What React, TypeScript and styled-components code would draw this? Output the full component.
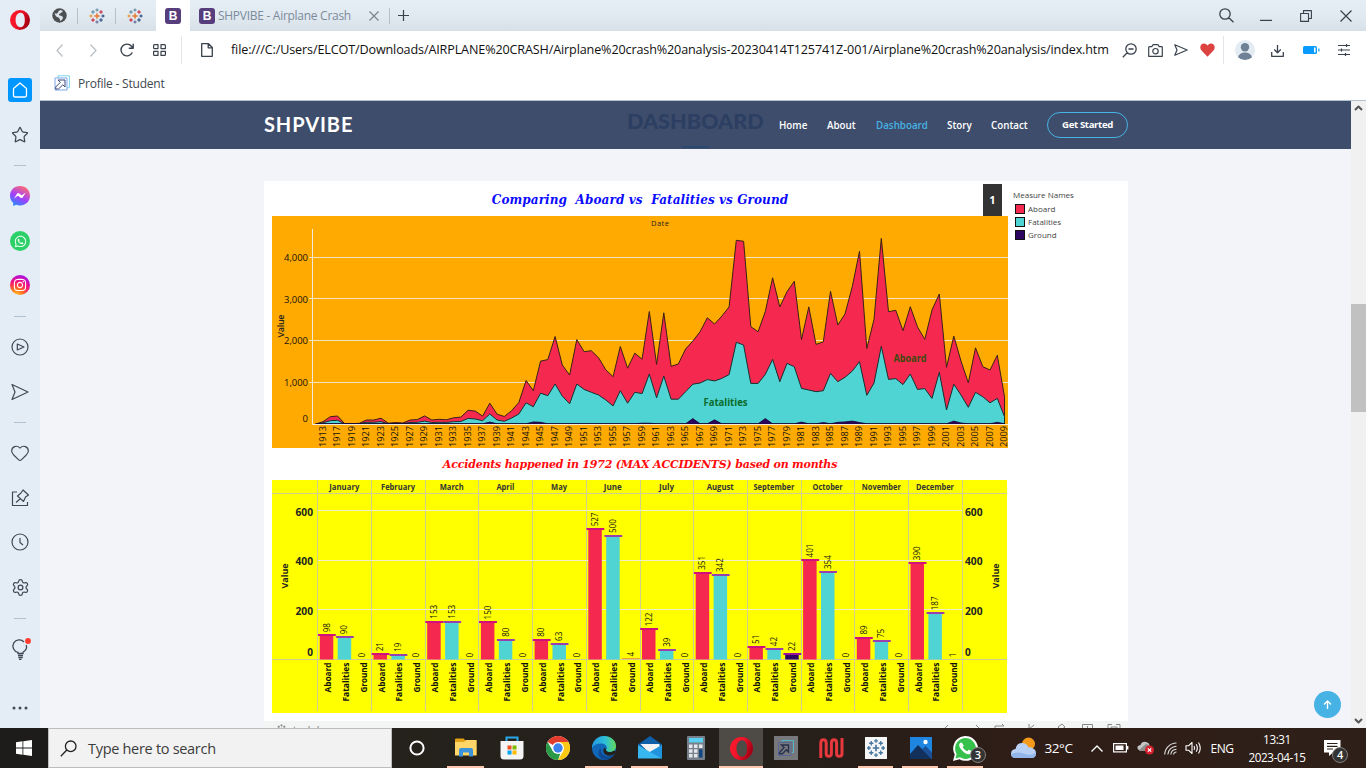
import React from "react";
import styled, { createGlobalStyle } from "styled-components";
import { Star, Heart, Settings } from "lucide-react";
import { FaWhatsapp, FaInstagram } from "react-icons/fa";

const Global = createGlobalStyle`
  * { box-sizing: border-box; }
  body { margin: 0; background: #f3f4fa; overflow: hidden; font-family: "Open Sans", "Noto Sans", sans-serif; }
  svg { display: block; flex: none; }
`;

const Screen = styled.div`
  width: 1366px;
  height: 768px;
  display: flex;
  flex-direction: column;
  overflow: hidden;
`;
const Browser = styled.div`
  height: 728px;
  display: flex;
`;
const Sidebar = styled.aside`
  width: 40px;
  background: #e4edf5;
  display: flex;
  flex-direction: column;
  align-items: center;
  color: #3f4a56;
`;
const SideItem = styled.div<{ $gap: number; $h: number }>`
  margin-top: ${(p) => p.$gap}px;
  height: ${(p) => p.$h}px;
  flex: none;
  display: flex;
  align-items: center;
  justify-content: center;
`;
const SideRule = styled.div<{ $gap: number }>`
  margin-top: ${(p) => p.$gap}px;
  width: 12px;
  height: 1px;
  flex: none;
  background: #b3c2d0;
`;
const HomeTile = styled.div`
  width: 24px;
  height: 24px;
  border-radius: 3px;
  background: #0096ff;
  display: flex;
  align-items: center;
  justify-content: center;
`;
const Disc = styled.div<{ $bg: string }>`
  width: 20px;
  height: 20px;
  border-radius: 50%;
  background: ${(p) => p.$bg};
  color: #fff;
  display: flex;
  align-items: center;
  justify-content: center;
`;
const Window = styled.div`
  width: 1326px;
  display: flex;
  flex-direction: column;
`;
const TabBar = styled.div`
  height: 31px;
  display: flex;
  align-items: stretch;
  background: linear-gradient(#e5edf5 0%, #e1e9f1 50%, #d7dfe7 100%);
`;
const Cell = styled.div<{ $w: number }>`
  width: ${(p) => p.$w}px;
  flex: none;
  display: flex;
  align-items: center;
  justify-content: center;
  color: #39424c;
`;
const PageCell = styled(Cell)`
  padding-left: 3px;
`;
const Tab = styled(Cell)<{ $active?: boolean; $rule?: boolean }>`
  background: ${(p) => (p.$active ? "#fff" : "transparent")};
  background-image: ${(p) => (p.$rule ? "linear-gradient(#b4c0cc, #b4c0cc)" : "none")};
  background-size: 1px 16px;
  background-repeat: no-repeat;
  background-position: right center;
`;
const WideTab = styled.div`
  width: 199px;
  flex: none;
  padding-left: 9px;
  display: flex;
  align-items: center;
  color: #7c8b9a;
  font-size: 12px;
`;
const TabTitle = styled.span`
  width: 154px;
  padding-left: 3px;
  white-space: nowrap;
  letter-spacing: -0.28px;
`;
const BootMark = styled.div`
  width: 16px;
  height: 16px;
  border-radius: 3px;
  background: #563d7c;
  color: #fff;
  font: bold 12px/16px "Liberation Sans", sans-serif;
  text-align: center;
`;
const Spring = styled.div`
  flex: 1;
`;
const Toolbar = styled.div`
  height: 38px;
  display: flex;
  align-items: stretch;
  background: #fff;
`;
const Address = styled.div`
  width: 886px;
  flex: none;
  padding-left: 3px;
  font-size: 12.6px;
  line-height: 38px;
  color: #111;
  white-space: nowrap;
  letter-spacing: -0.135px;
`;
const VRule = styled.div`
  width: 1px;
  height: 28px;
  margin-top: 5px;
  flex: none;
  background: #e2e6ea;
`;
const Bookmarks = styled.div`
  height: 32px;
  padding: 0 0 3px 14px;
  display: flex;
  align-items: center;
  gap: 8px;
  background: #fff;
  border-bottom: 1px solid #b2c1cd;
  font-size: 12px;
  letter-spacing: -0.22px;
  color: #40484f;
`;
const Page = styled.div`
  flex: 1;
  display: flex;
  min-height: 0;
`;
const Site = styled.main`
  width: 1311px;
  background: #f3f4fa;
  position: relative;
  overflow: hidden;
`;
const SiteHeader = styled.header`
  height: 48px;
  background: #3e4d6b;
  display: flex;
  align-items: center;
  padding: 0 223px 0 224px;
  position: relative;
`;
const Brand = styled.div`
  color: #fff;
  font: 700 20px/24px Lato, sans-serif;
  letter-spacing: 0.9px;
  position: relative;
  top: -1px;
  flex: 1;
`;
const GhostTitle = styled.div`
  position: absolute;
  left: 587px;
  top: 7px;
  color: #2c3f62;
  font: 900 21.6px/26px Lato, sans-serif;
  white-space: nowrap;
`;
const GhostBar = styled.div`
  position: absolute;
  left: 642px;
  top: 45px;
  width: 27px;
  height: 2px;
  background: #2c4a6e;
`;
const Nav = styled.nav`
  display: flex;
  align-items: center;
  position: relative;
  font-weight: 600;
`;
const NavLink = styled.span<{ $on?: boolean; $w: number }>`
  width: ${(p) => p.$w}px;
  margin-right: 20px;
  font-size: 9.8px;
  white-space: nowrap;
  color: ${(p) => (p.$on ? "#47b2e4" : "#fff")};
`;
const Cta = styled.span`
  width: 81px;
  height: 26px;
  border: 1px solid #47b2e4;
  border-radius: 13px;
  color: #fff;
  font-size: 9.6px;
  letter-spacing: -0.35px;
  font-weight: 700;
  line-height: 23px;
  text-align: center;
`;
const Card = styled.section`
  width: 864px;
  height: 560px;
  margin: 32px 0 0 224px;
  background: #fff;
  display: flex;
  flex-direction: column;
`;
const CardBody = styled.div`
  height: 540px;
  flex: none;
  display: flex;
  padding-left: 8px;
`;
const Sheets = styled.div`
  width: 736px;
`;
const SheetTitle = styled.h2<{ $color: string; $h: number; $size: number; $track: number; $drop?: number }>`
  margin: 0;
  height: ${(p) => p.$h}px;
  padding-top: ${(p) => p.$drop ?? 0}px;
  line-height: ${(p) => p.$h - (p.$drop ?? 0)}px;
  color: ${(p) => p.$color};
  font-family: "DejaVu Serif", serif;
  font-size: ${(p) => p.$size}px;
  letter-spacing: ${(p) => p.$track}px;
  font-weight: 700;
  font-style: italic;
  text-align: center;
  white-space: pre;
`;
const TitleRow = styled.div`
  display: flex;
  height: 35px;
  padding: 3px 6px 0 25px;
`;
const PageBadge = styled.div`
  width: 19px;
  height: 32px;
  background: #333;
  color: #fff;
  font: bold 11px/32px "Open Sans", sans-serif;
  text-align: center;
`;
const Grow = styled.div`
  flex: 1;
`;
const Legend = styled.div`
  padding: 8px 0 0 5px;
  font-size: 8px;
  color: #444;
  width: 110px;
`;
const LegendHead = styled.div`
  height: 13px;
  line-height: 12px;
  white-space: nowrap;
`;
const LegendRow = styled.div`
  height: 13px;
  display: flex;
  align-items: center;
  gap: 3px;
  padding-left: 2px;
`;
const Swatch = styled.i<{ $c: string }>`
  width: 10px;
  height: 10px;
  border: 1px solid #111;
  background: ${(p) => p.$c};
`;
const CardFoot = styled.div`
  flex: 1;
  background: #f3f5f5;
  display: flex;
  align-items: flex-start;
  padding: 3px 6px 0 12px;
  gap: 6px;
  color: #777;
  font-size: 10px;
  line-height: 12px;
  letter-spacing: 2.8px;
`;
const FootTools = styled.div`
  margin-left: auto;
`;
const BackTop = styled.div`
  position: absolute;
  left: 1274px;
  top: 590px;
  width: 27px;
  height: 27px;
  border-radius: 50%;
  background: #47b2e4;
  display: flex;
  align-items: center;
  justify-content: center;
`;
const Scroll = styled.div`
  width: 15px;
  background: #f1f1f1;
  display: flex;
  flex-direction: column;
  align-items: center;
  justify-content: space-between;
  padding: 4px 0;
`;
const Thumb = styled.div`
  width: 15px;
  height: 108px;
  margin: 193px 0 auto;
  background: #c1c1c1;
`;
const Taskbar = styled.footer`
  height: 40px;
  display: flex;
  background: linear-gradient(90deg, #1d1c1b 0%, #25211b 30%, #241f1a 55%, #2f1d17 75%, #2e2019 100%);
`;
const Search = styled.div`
  width: 344px;
  flex: none;
  background: #f2f2f2;
  border: 1px solid #bdbdbd;
  display: flex;
  align-items: center;
  gap: 11px;
  padding-left: 11px;
  font-size: 14.5px;
  letter-spacing: -0.3px;
  color: #3c3c3c;
`;
const Launcher = styled.div<{ $w: number; $open?: boolean; $active?: boolean }>`
  width: ${(p) => p.$w}px;
  flex: none;
  display: flex;
  align-items: center;
  justify-content: center;
  position: relative;
  background: ${(p) => (p.$active ? "#4e4a46" : "transparent")};
  &::after {
    content: "";
    display: ${(p) => (p.$open || p.$active ? "block" : "none")};
    position: absolute;
    left: ${(p) => (p.$active ? 0 : 4)}px;
    right: ${(p) => (p.$active ? 0 : 5)}px;
    bottom: 0;
    height: 2px;
    background: #fcc7ae;
  }
`;
const CountBadge = styled.span<{ $x: number; $y: number }>`
  position: absolute;
  left: ${(p) => p.$x}px;
  top: ${(p) => p.$y}px;
  width: 16px;
  height: 16px;
  border-radius: 50%;
  background: #333;
  border: 1px solid #85807c;
  color: #fff;
  font-size: 11px;
  font-weight: 600;
  line-height: 14px;
  text-align: center;
`;
const Tray = styled.div<{ $w: number; $size?: number }>`
  width: ${(p) => p.$w}px;
  flex: none;
  position: relative;
  display: flex;
  align-items: center;
  justify-content: center;
  color: #fff;
  font-size: ${(p) => p.$size ?? 12}px;
  letter-spacing: -0.4px;
  white-space: nowrap;
`;
const ClockText = styled.div`
  width: 70px;
  flex: none;
  color: #fff;
  font-size: 11.7px;
  line-height: 18px;
  padding-top: 2px;
  text-align: center;
  letter-spacing: -0.4px;
`;

const RED = "#f5284f";
const TEAL = "#4fd3d3";
const INDIGO = "#2b0560";

/* ---------- small drawings ---------- */
function OperaMark({ size, id }: { size: number; id: string }) {
  return (
    <svg width={size} height={size} viewBox="0 0 20 20">
      <defs>
        <linearGradient id={id} x1="0" x2="1" y1="0" y2="0.4">
          <stop offset="0" stopColor="#ff1b2d" />
          <stop offset="0.55" stopColor="#f0142a" />
          <stop offset="1" stopColor="#a70014" />
        </linearGradient>
      </defs>
      <path
        fillRule="evenodd"
        fill={`url(#${id})`}
        d="M10 0a10 10 0 1 0 0 20a10 10 0 1 0 0-20M10.600 2.800c3 0 4.200 3.300 4.200 7.200s-1.200 7.200-4.200 7.200s-5-3-5-7.200s2-7.200 5-7.200"
      />
    </svg>
  );
}

function TableauMark({ size, mono }: { size: number; mono?: string }) {
  const plus: [number, number, number, string][] = [
    [8, 8, 2.7, "#e8762c"],
    [4, 4, 1.8, "#59879b"],
    [12, 4, 1.8, "#c72037"],
    [4, 12, 1.8, "#c72037"],
    [12, 12, 1.8, "#1f457e"],
    [8, 2, 1.6, "#59879b"],
    [8, 14, 1.6, "#5c6692"],
    [2, 8, 1.6, "#eb912c"],
    [14, 8, 1.6, "#1f457e"],
  ];
  return (
    <svg width={size} height={size} viewBox="0 0 16 16">
      {plus.map(([x, y, r, c], i) => (
        <path key={i} d={`M${x - r} ${y}h${2 * r}M${x} ${y - r}v${2 * r}`} stroke={mono ?? c} strokeWidth={i ? 1.1 : 1.4} />
      ))}
    </svg>
  );
}

function ProfileMark({ size }: { size: number }) {
  return (
    <svg width={size} height={size} viewBox="0 0 16 16" fill="none">
      <path d="M4 3V.8h11.400v12h-2.400" stroke="#7cd6f0" />
      <path d="M1 3h12v12h-12z" stroke="#7fa5e8" />
      <path d="M4 5h7v7l-2.200-2.200l-4.300 4.200H1.700v-2l4.700-4.700z" stroke="#3b4a78" />
    </svg>
  );
}

function Line({ d, w, h, sw = 1.2, fill = "none", color = "currentColor" }: { d: string; w: number; h: number; sw?: number; fill?: string; color?: string }) {
  return (
    <svg width={w} height={h} viewBox={`0 0 ${w} ${h}`} fill={fill} stroke={color} strokeWidth={sw} strokeLinejoin="round">
      <path d={d} />
    </svg>
  );
}

function WhatsAppBig() {
  return (
    <svg width="25" height="25" viewBox="0 0 24 24">
      <path d="M0 24l1.700-6.200A11.900 11.900 0 1 1 6.200 22.300z" fill="#fff" />
      <path d="M2.300 21.700l1.200-4.400A10 10 0 1 1 6.700 20.500z" fill="#35c14b" />
      <path d="M8.700 6.700c-.3-.7-1.400-.7-2 0c-1.200 1.300-1.200 3.200 1 6c2.300 2.900 5 4.800 7.600 4.800c1.800 0 2.800-1.200 2.800-2.700c0-.5-2.600-1.700-3-1.700c-.6 0-1 1.600-1.600 1.500c-1.300-.4-3.700-2.400-4.200-3.700c-.1-.5 1-1.100 1-1.700z" fill="#fff" />
    </svg>
  );
}

/* ---------- area chart ---------- */
const ABOARD = [
  0, 56, 176, 192, 5, 8, 16, 96, 96, 140, 20, 35, 25, 96, 105, 195, 95, 112, 100, 150, 165, 330, 310, 190, 500, 235, 180, 320, 515, 1045, 800, 1510,
  1545, 2100, 1415, 1175, 2025, 1735, 1760, 1590, 1300, 1135, 1860, 1340, 1700, 1555, 2700, 1430, 2670, 1385, 1440, 1800, 1990, 2215, 2550, 2400,
  2590, 2810, 4410, 4385, 2335, 2215, 2700, 3510, 2810, 3175, 3425, 2025, 2810, 1910, 1970, 3185, 2375, 2640, 3300, 4145, 1810, 2510, 4455, 2695,
  2730, 2240, 2815, 2330, 2030, 2735, 3120, 1360, 2110, 1510, 990, 1830, 1375, 1295, 1650, 655,
];
const FATAL = [
  0, 30, 80, 90, 3, 3, 8, 40, 40, 55, 8, 15, 10, 35, 40, 70, 35, 40, 38, 55, 60, 135, 120, 80, 240, 95, 65, 145, 240, 510, 415, 740, 680, 960, 670,
  485, 960, 830, 760, 695, 575, 435, 800, 500, 760, 730, 1200, 630, 1150, 595, 595, 775, 955, 985, 1065, 1035, 1095, 1185, 1960, 1895, 975, 975,
  1190, 1550, 1015, 1455, 1375, 855, 815, 775, 800, 1215, 1015, 1120, 1270, 1495, 690, 985, 1865, 1070, 1090, 945, 1200, 830, 850, 615, 1240, 335,
  955, 695, 400, 760, 655, 510, 615, 175,
];
const GROUND_PEAKS: Record<number, number> = {
  24: 45, 30: 50, 31: 40, 46: 20, 45: 20, 52: 130, 55: 100, 62: 130, 67: 45, 70: 35, 72: 40, 73: 50, 74: 70, 75: 35, 88: 70, 89: 25, 94: 40,
};
const GROUND = ABOARD.map((_, i) => GROUND_PEAKS[i] ?? 5);

const px = (i: number) => 43.8 + i * 7.25;
const py = (v: number) => 208 - v / 24;
const area = (vals: number[]) => `M${px(0)} 208` + vals.map((v, i) => `L${px(i).toFixed(1)} ${py(v).toFixed(1)}`).join("") + `V208Z`;

const YEARS = [1913, ...Array.from({ length: 47 }, (_, k) => 1917 + k * 2)];

function AreaChart() {
  return (
    <svg width="736" height="232" viewBox="0 0 736 232" fontFamily="Open Sans, sans-serif">
      <rect width="736" height="232" fill="#ffaa00" />
      {[1000, 2000, 3000, 4000].map((v) => (
        <g key={v}>
          <path d={`M37 ${Math.floor(py(v) - 0.1) + 0.5}H736`} stroke="#f3e3c0" />
          <text x="36" y={py(v) + 3.7} fontSize="9.500" textAnchor="end" textLength="24" lengthAdjust="spacingAndGlyphs" fill="#111">
            {v.toLocaleString("en-US")}
          </text>
        </g>
      ))}
      <text x="36" y="206" fontSize="9.500" textAnchor="end" fill="#111">0</text>
      <path d={area(ABOARD)} fill={RED} stroke="#3a2018" strokeWidth="1" />
      <path d={area(FATAL)} fill={TEAL} stroke="#16302f" strokeWidth="1" />
      <path d={area(GROUND)} fill={INDIGO} stroke="#160330" strokeWidth="0.800" />
      <path d="M40.500 13V208.500H736" stroke="#f1e9dc" fill="none" />
      <text x="388" y="10" fontSize="7.500" textAnchor="middle" textLength="18" fill="#222">Date</text>
      <text transform="translate(11.500 110) rotate(-90)" fontSize="9" fontWeight="600" textAnchor="middle" textLength="23" fill="#222">Value</text>
      {YEARS.map((y) => {
        const i = y === 1913 ? 1 : y - 1914;
        return (
          <text key={y} transform={`translate(${px(i) + 2.8} 231) rotate(-90)`} fontSize="9.300" textLength="21" lengthAdjust="spacingAndGlyphs" fill="#111">
            {y}
          </text>
        );
      })}
      <text x="638" y="146" fontSize="10" fontWeight="700" textAnchor="middle" textLength="33" lengthAdjust="spacingAndGlyphs" fill="#3c4a10">Aboard</text>
      <text x="453.500" y="190" fontSize="10" fontWeight="700" textAnchor="middle" textLength="44" lengthAdjust="spacingAndGlyphs" fill="#0c6b2b">Fatalities</text>
    </svg>
  );
}

/* ---------- monthly bar chart ---------- */
const MONTHS: [string, number, number, number][] = [
  ["January", 98, 90, 0],
  ["February", 21, 19, 0],
  ["March", 153, 153, 0],
  ["April", 150, 80, 0],
  ["May", 80, 63, 0],
  ["June", 527, 500, 4],
  ["July", 122, 39, 0],
  ["August", 351, 342, 0],
  ["September", 51, 42, 22],
  ["October", 401, 354, 0],
  ["November", 89, 75, 0],
  ["December", 390, 187, 1],
];
const MONTH_W: Record<string, number> = {
  January: 30, February: 34, March: 24, April: 18, May: 16, June: 18, July: 15, August: 27, September: 41, October: 30, November: 39, December: 38,
};
const LABELS: [string, number, string][] = [["Aboard", 30, RED], ["Fatalities", 39, TEAL], ["Ground", 30, INDIGO]];
const COL = 53.7;
const bx = (i: number) => 45.3 + i * COL;
const by = (v: number) => 179.5 - v * 0.247;

function BarChart() {
  return (
    <svg width="735" height="233" viewBox="0 0 735 233" fontFamily="Open Sans, sans-serif">
      <rect width="735" height="233" fill="#ffff00" />
      <g stroke="#cfcf94">
        <path d="M0 13.500H735M0 179.500H735" />
        {Array.from({ length: 13 }, (_, i) => (
          <path key={i} d={`M${Math.round(bx(i)) + 0.5} 0V231`} />
        ))}
      </g>
      {[200, 400, 600].map((v) => (
        <g key={v}>
          <path d={`M46 ${Math.floor(179.5 - v * 0.248) + 0.5}H690`} stroke="#f0f0c4" />
          <text x="41" y={by(v) + 4.5} fontSize="10" fontWeight="700" textAnchor="end" textLength="17.500" lengthAdjust="spacingAndGlyphs" fill="#222">{v}</text>
          <text x="693" y={by(v) + 4.5} fontSize="10" fontWeight="700" textLength="17.500" lengthAdjust="spacingAndGlyphs" fill="#222">{v}</text>
        </g>
      ))}
      <text x="41" y="176" fontSize="10" fontWeight="700" textAnchor="end" fill="#222">0</text>
      <text x="693" y="176" fontSize="10" fontWeight="700" fill="#222">0</text>
      <text transform="translate(16 96) rotate(-90)" fontSize="9.500" fontWeight="700" textAnchor="middle" textLength="25" lengthAdjust="spacingAndGlyphs" fill="#222">Value</text>
      <text transform="translate(727 96) rotate(-90)" fontSize="9.500" fontWeight="700" textAnchor="middle" textLength="25" lengthAdjust="spacingAndGlyphs" fill="#222">Value</text>
      {MONTHS.map(([name, ...vals], m) => (
        <g key={name}>
          <text x={bx(m) + 27} y="10" fontSize="8" fontWeight="700" textAnchor="middle" textLength={MONTH_W[name]} lengthAdjust="spacingAndGlyphs" fill="#333">{name}</text>
          {vals.map((v, k) => {
            const x = bx(m) + 0.7 + k * 17.9;
            const top = by(v);
            return (
              <g key={k}>
                {v > 4 && <rect x={x + 1.8} y={top} width="13.500" height={179.5 - top} fill={LABELS[k][2]} />}
                {v > 4 && <rect x={x} y={Math.round(top) - 1} width="17.800" height="2" fill={k === 0 ? "#d0107c" : k === 1 ? "#9a3fae" : "#a0109a"} />}
                {v === 4 && <path d={`M${x} ${top}h17.500`} stroke="#f0a030" />}
                <text transform={`translate(${x + 11.5} ${top - (v > 4 ? 3 : 2)}) rotate(-90)`} fontSize="8.800" textLength={String(v).length * 4.6} lengthAdjust="spacingAndGlyphs" fill="#111">{v}</text>
                <text transform={`translate(${x + 12.8} 182.500) rotate(-90)`} fontSize="9.200" fontWeight="700" textAnchor="end" textLength={LABELS[k][1]} lengthAdjust="spacingAndGlyphs" fill="#111">{LABELS[k][0]}</text>
              </g>
            );
          })}
        </g>
      ))}
    </svg>
  );
}

const SEND = "M1 1.500L17 9L1 16.500L4 9Z";

export default function App() {
  return (
    <>
      <Global />
      <Screen>
        <Browser>
          <Sidebar>
            <SideItem $gap={10} $h={20}><OperaMark size={20} id="op1" /></SideItem>
            <SideItem $gap={48} $h={24}>
              <HomeTile><Line w={16} h={16} color="#fff" sw={1.3} d="M8 1L14.500 6.500V13.500Q14.500 15 13 15H3Q1.500 15 1.500 13.500V6.500Z" /></HomeTile>
            </SideItem>
            <SideItem $gap={24} $h={18}><Star size={18} strokeWidth={1.7} /></SideItem>
            <SideRule $gap={21} />
            <SideItem $gap={20} $h={20}>
              <svg width="20" height="20" viewBox="0 0 20 20">
                <defs>
                  <linearGradient id="ms" x1="0.2" y1="1" x2="0.7" y2="0">
                    <stop offset="0" stopColor="#1d90ff" /><stop offset="0.45" stopColor="#a040ff" /><stop offset="1" stopColor="#ff6a70" />
                  </linearGradient>
                </defs>
                <path d="M10 0C4.300 0 0 4.200 0 9.700c0 2.900 1.200 5.400 3.200 7.100V20l3-1.200c1.200.4 2.500.6 3.800.6c5.700 0 10-4.200 10-9.700S15.700 0 10 0" fill="url(#ms)" />
                <path d="M4 12.500l3-4.700q1-1.200 2.200-.3l2.100 1.600q.5.300 1 0l3.400-2.500l-3 4.800q-1 1.200-2.200.3l-2.100-1.600q-.5-.3-1 0z" fill="#fff" />
              </svg>
            </SideItem>
            <SideItem $gap={25} $h={20}><Disc $bg="#2bd168"><FaWhatsapp size={13} /></Disc></SideItem>
            <SideItem $gap={24} $h={20}>
              <Disc $bg="radial-gradient(circle at 30% 105%, #ffd028 0%, #ff6a20 30%, #f5107c 58%, #b012d8 82%, #6b2cff 100%)"><FaInstagram size={14} /></Disc>
            </SideItem>
            <SideRule $gap={21} />
            <SideItem $gap={21} $h={18}><Line w={18} h={18} d="M9 1a8 8 0 1 0 0 16a8 8 0 1 0 0-16M6.300 6v6L13 9z" /></SideItem>
            <SideItem $gap={27} $h={18}><Line w={18} h={18} d={SEND} /></SideItem>
            <SideRule $gap={21} />
            <SideItem $gap={21} $h={18}><Heart size={20} strokeWidth={1.4} /></SideItem>
            <SideItem $gap={27} $h={18}>
              <Line w={18} h={18} d="M6 3H1.500V16.500H16.500V13M12 1L17.500 6L14.500 8L12.500 12.500L6.500 7L10 4ZM9.500 9.500L5 13.500" />
            </SideItem>
            <SideItem $gap={26} $h={18}><Line w={18} h={18} d="M9 1a8 8 0 1 0 0 16a8 8 0 1 0 0-16M9 5V9.500L12 12" /></SideItem>
            <SideItem $gap={27} $h={18}><Settings size={19} strokeWidth={1.6} /></SideItem>
            <SideRule $gap={22} />
            <SideItem $gap={20} $h={20}>
              <svg width="24" height="22" viewBox="0 0 24 22" fill="none" stroke="currentColor" strokeWidth="1.300">
                <path d="M16 4A6.300 6.300 0 1 0 10 14.300V15.500H15V14.300C18.500 12 19 9 18.200 7M10 17.500h5M10.300 19.500h4.500M11 21.300h2.500" />
                <circle cx="20" cy="3" r="2.900" fill="#ff3b30" stroke="none" />
              </svg>
            </SideItem>
            <SideItem $gap={47} $h={4}>
              <svg width="16" height="4" fill="currentColor"><circle cx="2" cy="2" r="1.500" /><circle cx="8" cy="2" r="1.500" /><circle cx="14" cy="2" r="1.500" /></svg>
            </SideItem>
          </Sidebar>

          <Window>
            <TabBar>
              <Tab $w={38} $rule>
                <svg width="15" height="15" viewBox="0 0 15 15">
                  <circle cx="7.500" cy="7.500" r="7.200" fill="#4c4f52" />
                  <path d="M2.500 5Q5 6.500 6 4.500Q6 2.500 8.500 2L11 3L9 5Q6 6 7.500 7.500Q11 7.500 11 10Q10 12.500 8 13Q8.500 10.500 6.500 9.500Q3.500 9 2.500 5Z" fill="#dce3ea" />
                </svg>
              </Tab>
              <Tab $w={38} $rule><TableauMark size={16} /></Tab>
              <Tab $w={37}><TableauMark size={16} /></Tab>
              <Tab $w={3} />
              <Tab $w={34} $active><BootMark>B</BootMark></Tab>
              <WideTab>
                <BootMark>B</BootMark>
                <TabTitle>SHPVIBE - Airplane Crash</TabTitle>
                <Line w={10} h={10} color="#77828c" sw={1.1} d="M.5 .5L9.500 9.500M9.500 .5L.5 9.500" />
              </WideTab>
              <Cell $w={1}><Line w={1} h={16} color="#b4c0cc" d="M.5 0V16" /></Cell>
              <Cell $w={27}><Line w={11} h={11} sw={1.2} d="M5.500 0V11M0 5.500H11" /></Cell>
              <Spring />
              <Cell $w={40}><Line w={15} h={15} sw={1.3} d="M6 .8a5 5 0 1 0 0 10.400a5 5 0 1 0 0-10.400M9.800 9.800L14.500 14.300" /></Cell>
              <Cell $w={40}><Line w={12} h={11} sw={1.2} d="M0 10.400H12" /></Cell>
              <Cell $w={40}><Line w={12} h={12} sw={1.1} d="M.6 3.500H8.500V11.400H.6ZM3.500 3.500V.6H11.400V8.500H8.500" /></Cell>
              <Cell $w={40}><Line w={12} h={12} sw={1.2} d="M.5 .5L11.500 11.500M11.500 .5L.5 11.500" /></Cell>
            </TabBar>

            <Toolbar>
              <Cell $w={39}><Line w={7} h={13} color="#b9bec3" d="M6.500 .5L1 6.500L6.500 12.500" /></Cell>
              <Cell $w={29}><Line w={7} h={13} color="#b9bec3" d="M.5 .5L6 6.500L.5 12.500" /></Cell>
              <Cell $w={37}><Line w={14} h={14} sw={1.4} d="M12.300 9.500A5.900 5.900 0 1 1 11.500 3.200L13 5M13.200 .8V5.200H8.800" /></Cell>
              <Cell $w={29}><Line w={13} h={12} sw={1.2} d="M1.500 .6H5V4.600H1.500Q.6 4.600 .6 3.700V1.500Q.6 .6 1.500 .6M8 .6H11.500Q12.400 .6 12.400 1.500V4.600H8ZM.6 7.400H5V11.400H1.500Q.6 11.400 .6 10.500ZM8 7.400H12.400V10.500Q12.400 11.400 11.500 11.400H8Z" /></Cell>
              <Cell $w={7} />
              <VRule />
              <PageCell $w={46}><Line w={12} h={14} sw={1.3} d="M.7 .7H7.500L11.300 4.500V13.300H.7ZM7.200 .7V4.800H11.300" /></PageCell>
              <Address>file:///C:/Users/ELCOT/Downloads/AIRPLANE%20CRASH/Airplane%20crash%20analysis-20230414T125741Z-001/Airplane%20crash%20analysis/index.htm</Address>
              <Cell $w={30}><Line w={15} h={15} sw={1.3} d="M9 .8a5.200 5.200 0 1 0 0 10.400a5.200 5.200 0 1 0 0-10.400M5.200 9.800L.8 14.200M6.500 6H11.500" /></Cell>
              <Cell $w={23}><Line w={15} h={13} sw={1.2} d="M1.500 2.600H3.800L5 .7H10L11.200 2.600H13.500Q14.300 2.600 14.300 3.400V12.300H.7V3.400Q.7 2.600 1.500 2.600M7.500 4.500a2.700 2.700 0 1 0 0 5.400a2.700 2.700 0 1 0 0-5.400" /></Cell>
              <Cell $w={28}><Line w={14} h={12} sw={1.2} d="M.8 .8L13.200 6L.8 11.200L3 6Z" /></Cell>
              <Cell $w={24}>
                <svg width="15" height="14" viewBox="0 0 15 14"><path d="M7.500 13.700L1.300 7.300C-.8 4.800 .5 .5 4 .5Q6.200 .5 7.500 2.500Q8.800 .5 11 .5C14.500 .5 15.800 4.800 13.700 7.300Z" fill="#dc4340" /></svg>
              </Cell>
              <Cell $w={4} />
              <VRule />
              <Cell $w={42}>
                <svg width="20" height="20" viewBox="0 0 20 20">
                  <circle cx="10" cy="10" r="10" fill="#e3ebf3" />
                  <circle cx="10" cy="7.200" r="4.200" fill="#6f8195" />
                  <path d="M3 17.200Q4.500 12.500 10 12.500T17 17.200Q14 20 10 20T3 17.200" fill="#6f8195" />
                </svg>
              </Cell>
              <Cell $w={23}><Line w={13} h={13} sw={1.3} d="M.7 8V12.300H12.300V8M6.500 1V8.500M3.200 5.500L6.500 8.800L9.800 5.500" /></Cell>
              <Cell $w={44}>
                <svg width="17" height="8" viewBox="0 0 17 8"><rect width="14" height="8" rx="1.500" fill="#0a9bff" /><rect x="11" y="1.500" width="1.600" height="5" fill="#fff" /><rect x="15.300" y="2.500" width="1.200" height="3" fill="#0a9bff" /></svg>
              </Cell>
              <Cell $w={22}><Line w={12} h={12} sw={1.2} d="M0 1.500H12M0 6H12M0 10.500H12M8.500 0V3M3.500 4.500V7.500M7.500 9V12" /></Cell>
            </Toolbar>

            <Bookmarks><ProfileMark size={16} />Profile - Student</Bookmarks>

            <Page>
              <Site>
                <SiteHeader>
                  <GhostTitle>DASHBOARD</GhostTitle>
                  <GhostBar />
                  <Brand>SHPVIBE</Brand>
                  <Nav>
                    <NavLink $w={28}>Home</NavLink>
                    <NavLink $w={29}>About</NavLink>
                    <NavLink $w={51} $on>Dashboard</NavLink>
                    <NavLink $w={24}>Story</NavLink>
                    <NavLink $w={36}>Contact</NavLink>
                    <Cta>Get Started</Cta>
                  </Nav>
                </SiteHeader>
                <Card>
                  <CardBody>
                    <Sheets>
                      <TitleRow>
                        <Grow><SheetTitle $color="#0a0aff" $h={33} $size={12} $track={0.1}>{"Comparing  Aboard vs  Fatalities vs Ground"}</SheetTitle></Grow>
                        <PageBadge>1</PageBadge>
                      </TitleRow>
                      <AreaChart />
                      <SheetTitle $color="#ff0a0a" $h={32} $drop={2} $size={11} $track={-0.2}>Accidents happened in 1972 (MAX ACCIDENTS) based on months</SheetTitle>
                      <BarChart />
                    </Sheets>
                    <Legend>
                      <LegendHead>Measure Names</LegendHead>
                      <LegendRow><Swatch $c={RED} />Aboard</LegendRow>
                      <LegendRow><Swatch $c={TEAL} />Fatalities</LegendRow>
                      <LegendRow><Swatch $c={INDIGO} />Ground</LegendRow>
                    </Legend>
                  </CardBody>
                  <CardFoot>
                    <TableauMark size={11} mono="#777" />tableau
                    <FootTools>
                      <svg width="180" height="12" viewBox="0 0 180 12" fill="none" stroke="#888">
                        <path d="M6 1L1 6M34 1L39 6M53 2H62L60 0M53 2V5M87 0V5L92 1M116 3l4-3l3 3l-4 3zM140.500 .5H150.500V9M140.500 .5V9M145.500 2V6M166 4V.5H170M174 .5H178V4M169 3H175V8H169z" />
                      </svg>
                    </FootTools>
                  </CardFoot>
                </Card>
                <BackTop><Line w={9} h={9} color="#fff" sw={1.4} d="M4.500 9V1M1 4.500L4.500 1L8 4.500" /></BackTop>
              </Site>
              <Scroll>
                <Line w={9} h={6} color="#555" sw={2} d="M1 5L4.500 1.500L8 5" />
                <Thumb />
                <Line w={9} h={6} color="#555" sw={2} d="M1 1L4.500 4.500L8 1" />
              </Scroll>
            </Page>
          </Window>
        </Browser>

        <Taskbar>
          <Launcher $w={48}>
            <svg width="16" height="16" viewBox="0 0 16 16" fill="#fff"><path d="M0 2.200L6.500 1.300V7.600H0ZM7.300 1.200L16 0V7.600H7.300ZM0 8.400H6.500V14.700L0 13.800ZM7.300 8.400H16V16L7.300 14.800Z" /></svg>
          </Launcher>
          <Search>
            <Line w={17} h={17} color="#222" sw={1.3} d="M10.700 1a5.300 5.300 0 1 0 0 10.600a5.300 5.300 0 1 0 0-10.600M6.800 10L.8 16.200" />
            Type here to search
          </Search>
          <Launcher $w={49}><svg width="16" height="16"><circle cx="8" cy="8" r="6.600" fill="none" stroke="#fff" strokeWidth="2" /></svg></Launcher>
          <Tray $w={2} />
          <Launcher $w={46} $open>
            <svg width="22" height="20" viewBox="0 0 22 20">
              <path d="M0 1.500Q0 .5 1 .5H8.500L10.500 2.500H21.500V17H0Z" fill="#e2a317" />
              <path d="M0 4H9L11 2H21.500V17.500H0Z" fill="#ffd667" />
              <path d="M4 18.500V12Q4 10 6 10H16Q18 10 18 12V18.500H14V14.500H8V18.500Z" fill="#3d92dc" />
            </svg>
          </Launcher>
          <Launcher $w={46}>
            <svg width="24" height="24" viewBox="0 0 24 24">
              <path d="M6.500 6V1.500H17.500V6" fill="none" stroke="#28a8ea" strokeWidth="2" />
              <path d="M.5 5H23.500V20Q23.500 23.500 20 23.500H4Q.5 23.500 .5 20Z" fill="#f4f4f4" />
              <path d="M7.500 9.500H11.500V13.500H7.500Z" fill="#f04f23" /><path d="M12.500 9.500H16.500V13.500H12.500Z" fill="#7fba00" />
              <path d="M7.500 14.500H11.500V18.500H7.500Z" fill="#00a3ee" /><path d="M12.500 14.500H16.500V18.500H12.500Z" fill="#ffb901" />
            </svg>
          </Launcher>
          <Launcher $w={46}>
            <svg width="24" height="24" viewBox="0 0 24 24">
              <circle cx="12" cy="12" r="12" fill="#fff" />
              <path d="M12 12L1.600 6A12 12 0 0 1 22.400 6Z" fill="#e13b2e" />
              <path d="M12 6H22.400A12 12 0 0 1 12 24L17.200 15Z" fill="#fbc914" />
              <path d="M1.600 6L6.800 15L12 17.500L14.500 17L12 24A12 12 0 0 1 1.600 6Z" fill="#2a9a47" />
              <circle cx="12" cy="12" r="6" fill="#fff" /><circle cx="12" cy="12" r="4.700" fill="#3b82ee" />
            </svg>
          </Launcher>
          <Launcher $w={46} $open>
            <svg width="24" height="24" viewBox="0 0 24 24">
              <defs>
                <linearGradient id="ed" x1="0" x2="1"><stop offset="0" stopColor="#2498e0" /><stop offset="0.55" stopColor="#2cc0d8" /><stop offset="1" stopColor="#62d95a" /></linearGradient>
              </defs>
              <circle cx="12" cy="12" r="12" fill="#1167b8" />
              <path d="M0 11C1 4 6 0 12 0C19 0 24 4.500 24 10C24 14 21 16 18 16C15 16 13.500 15 14 13.800C16 12 14.500 8 10 7.500C5 7 1.500 9 0 12Z" fill="url(#ed)" />
              <path d="M9 12C8 16 11 20.500 16.500 20.500C19 20.500 21 19.500 22.300 18C19 23 14 25 9.500 23C5.500 20 5.500 14.500 9 12" fill="#0f4a94" />
              <path d="M14 14.300C14.500 16.300 18.500 17 22 14.800L24 15.500L22.300 18C17 21.500 11.500 19 11.300 14.500C11.500 12.500 12.500 12 13.500 12Z" fill="#241f1a" />
            </svg>
          </Launcher>
          <Launcher $w={46} $open>
            <svg width="24" height="24" viewBox="0 0 24 24">
              <path d="M0 8.500L12 0L24 8.500V12H0Z" fill="#0f5fa8" /><path d="M2.500 8H21.500V15L12 18Z" fill="#f2f2f2" />
              <path d="M0 9L12 16L24 9V22.500H0Z" fill="#38b6f0" /><path d="M24 9V22.500L12 16Z" fill="#1f93dd" />
            </svg>
          </Launcher>
          <Launcher $w={46}>
            <svg width="18" height="24" viewBox="0 0 18 24">
              <rect width="18" height="24" rx="1" fill="#77808a" /><rect x="2" y="2" width="14" height="4.500" fill="#58d0f4" />
              <path d="M2 8.500h3.500v3.500H2zM7 8.500h3.500v3.500H7zM12 8.500h3.500v3.500H12zM2 13.300h3.500v3.500H2zM7 13.300h3.500v3.500H7zM2 18.100h3.500v3.500H2zM7 18.100h3.500v3.500H7z" fill="#e4e8ec" />
              <path d="M12 13.300h3.500v8.300H12z" fill="#14467f" />
            </svg>
          </Launcher>
          <Launcher $w={44} $active><OperaMark size={23} id="op2" /></Launcher>
          <Launcher $w={46}>
            <svg width="24" height="24" viewBox="0 0 24 24" fill="none">
              <rect width="24" height="24" fill="#77787c" />
              <path d="M8 6V4.500H19.500V16.500H17.500" stroke="#54b7c8" /><path d="M4.500 6.500H17V19.500H4.500Z" stroke="#5a6696" />
              <path d="M7.500 9H14.500V16L12.300 13.800L8.500 17.800H5.500V16.500L10 11.500Z" stroke="#27304f" strokeWidth="1.400" />
            </svg>
          </Launcher>
          <Launcher $w={45}>
            <Line w={25} h={20} color="#e8383d" sw={3} d="M1.800 20V5Q1.800 1.700 4.500 1.700T7.200 5V15.500Q7.200 18.300 9.800 18.300T12.400 15.500V5Q12.400 1.700 15 1.700T17.600 5V15.500Q17.600 18.300 20.300 18.300T23 15.500V0" />
          </Launcher>
          <Launcher $w={44} $open>
            <svg width="22" height="22" viewBox="0 0 22 22"><rect width="22" height="22" fill="#f3f5f7" /><g transform="translate(1.500 1.500)"><TableauMark size={19} mono="#47749c" /></g></svg>
          </Launcher>
          <Launcher $w={45} $open>
            <svg width="22" height="22" viewBox="0 0 22 22"><rect width="22" height="22" fill="#1e86e0" /><path d="M0 17L8 8L22 22H0Z" fill="#12305c" /><path d="M12 12.500L15.500 9L22 15.500V22Z" fill="#1c4f96" /><circle cx="15.500" cy="5" r="2.200" fill="#fff" /></svg>
          </Launcher>
          <Launcher $w={45} $open><WhatsAppBig /><CountBadge $x={27} $y={19}>3</CountBadge></Launcher>
          <Spring />
          <Tray $w={30}>
            <svg width="26" height="22" viewBox="0 0 26 22">
              <circle cx="17.500" cy="7" r="6.500" fill="#f59a1b" />
              <path d="M5 21Q0 21 0 16.500Q0 12.500 4.500 12Q5.500 6 11 6Q16 6 17.500 10.500Q20 9.500 22 11.500Q25 12.500 25 16.500Q25 21 20 21Z" fill="#b7d0f4" />
              <path d="M5 21Q0 21 0 17Q8 14 14 17Q20 19 25 16Q25 21 20 21Z" fill="#93b6ea" />
            </svg>
          </Tray>
          <Tray $w={39} $size={13.5}>32°C</Tray>
          <Tray $w={12} />
          <Tray $w={14}><Line w={12} h={7} color="#fff" sw={1.4} d="M.5 6.500L6 1L11.500 6.500" /></Tray>
          <Tray $w={34}>
            <svg width="16" height="10" viewBox="0 0 16 10"><rect x=".6" y=".6" width="12.800" height="8.300" fill="none" stroke="#fff" strokeWidth="1.200" /><rect x="2.500" y="2.500" width="8" height="4.500" fill="#fff" /><rect x="14" y="3" width="1.400" height="3.500" fill="#fff" /></svg>
          </Tray>
          <Tray $w={16}>
            <svg width="18" height="14" viewBox="0 0 18 14"><path d="M2 9Q0 8 .5 5.500Q2 4 3.500 4Q5 0 9 1Q12 1.500 12.500 4V10H3Z" fill="#c5c5c5" /><path d="M2 9L9 3L12 4V10H3Z" fill="#8c8c8c" /><circle cx="12.500" cy="9" r="4.500" fill="#d8202f" /><path d="M10.800 7.300l3.400 3.400m0-3.400l-3.400 3.400" stroke="#fff" strokeWidth="1.200" /></svg>
          </Tray>
          <Tray $w={32}>
            <svg width="13" height="13" viewBox="0 0 13 13" fill="none" stroke="#ddd" strokeWidth="1.100"><path d="M.7 12.500A12 12 0 0 1 12.500 1M3.800 12.500A9 9 0 0 1 12.500 4.200M6.800 12.500A6 6 0 0 1 12.500 7.200M9.500 12.500A3 3 0 0 1 12.500 10" /></svg>
          </Tray>
          <Tray $w={16}>
            <Line w={18} h={14} color="#fff" sw={1.1} d="M1 4.800H3.500L7 1.500V12.500L3.500 9.200H1ZM9 5Q10.300 7 9 9M11.200 3.300Q13.500 7 11.200 10.700M13.500 1.500Q17 7 13.500 12.500" />
          </Tray>
          <Tray $w={40}>ENG</Tray>
          <ClockText>13:31<br />2023-04-15</ClockText>
          <Tray $w={41}>
            <svg width="17" height="16" viewBox="0 0 17 16"><path d="M0 0H16.500V12.500H9L5 16V12.500H0Z" fill="#fff" /><path d="M3 3.500H13.500M3 6.300H13.500M3 9H9" stroke="#2e2019" strokeWidth="1.200" /></svg>
            <CountBadge $x={20} $y={19}>4</CountBadge>
          </Tray>
          <Tray $w={13} />
        </Taskbar>
      </Screen>
    </>
  );
}
